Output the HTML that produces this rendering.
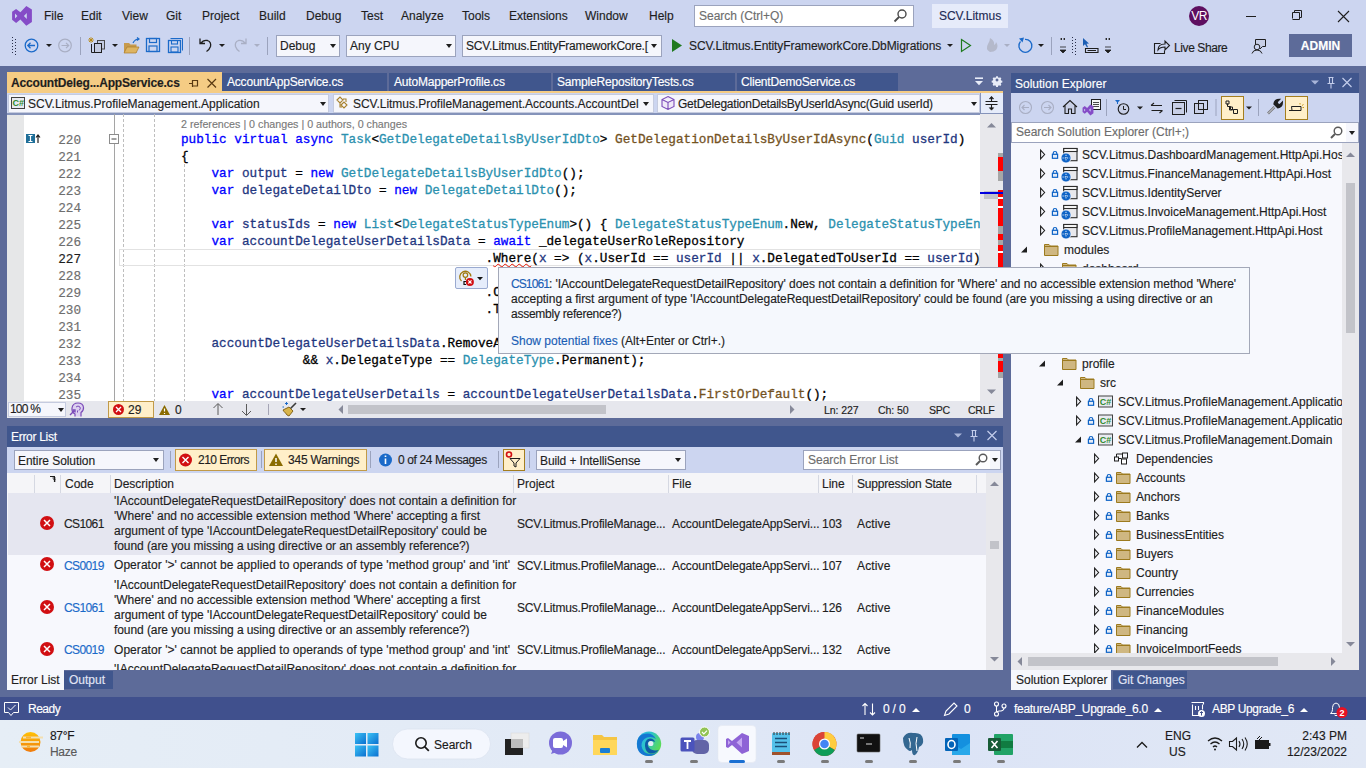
<!DOCTYPE html>
<html><head><meta charset="utf-8">
<style>
*{margin:0;padding:0;box-sizing:border-box}
html,body{width:1366px;height:768px;overflow:hidden;background:#5D6B99;font-family:"Liberation Sans",sans-serif;font-size:12px;color:#1E1E1E;-webkit-text-stroke:0.15px}
.a{position:absolute;white-space:nowrap}
.mono{font-family:"Liberation Mono",monospace}
#top{position:absolute;left:0;top:0;width:1366px;height:66px;background:#CCD5F0}
.menu{top:8px;font-size:12px;color:#1E1E1E;line-height:16px}
.combo{position:absolute;background:#F5F6FC;border:1px solid #9BA3BD;height:22px;line-height:20px;padding-left:3px;font-size:12px;color:#1E1E1E;overflow:hidden}
.dd{position:absolute;width:0;height:0;border-left:3.5px solid transparent;border-right:3.5px solid transparent;border-top:4px solid #1E1E1E}
.code{position:absolute;left:0;font-family:"Liberation Mono",monospace;font-size:12.7px;line-height:17px;white-space:pre;color:#000;-webkit-text-stroke:0.3px}
.k{color:#0000FF}.t{color:#2B91AF}.m{color:#74531F}.l{color:#1F377F}
.ln{position:absolute;left:0;width:81px;text-align:right;font-family:"Liberation Mono",monospace;font-size:12.7px;line-height:17px;color:#6E6E6E}
</style></head><body>
<div id="top"></div>
<!-- VS logo -->
<svg class="a" style="left:0;top:0" width="40" height="32" viewBox="0 0 40 32"><path d="M16.1 8.9 L20.4 12.3 L26.3 6 L31.9 9.4 V22 L26.3 25.8 L20.4 19.4 L16.1 22.9 L12.1 19.8 V11.8 Z M15 13.6 L17.4 16 L15 18.5 Z M26.8 13 L23.9 16.1 L26.8 19.1 Z" fill="#854CC7" fill-rule="evenodd"/></svg>
<span class="a menu" style="left:44px">File</span>
<span class="a menu" style="left:81px">Edit</span>
<span class="a menu" style="left:122px">View</span>
<span class="a menu" style="left:166px">Git</span>
<span class="a menu" style="left:202px">Project</span>
<span class="a menu" style="left:259px">Build</span>
<span class="a menu" style="left:306px">Debug</span>
<span class="a menu" style="left:361px">Test</span>
<span class="a menu" style="left:401px">Analyze</span>
<span class="a menu" style="left:462px">Tools</span>
<span class="a menu" style="left:509px">Extensions</span>
<span class="a menu" style="left:585px">Window</span>
<span class="a menu" style="left:649px">Help</span>
<div class="a" style="left:694px;top:5px;width:220px;height:22px;background:#FFF;border:1px solid #9BA3BD;padding-left:4px;line-height:20px;color:#6D6D6D">Search (Ctrl+Q)</div>
<svg class="a" style="left:890px;top:6px" width="20" height="20" viewBox="890 6 20 20"><circle cx="902" cy="14" r="4" fill="none" stroke="#4A4A4A" stroke-width="1.4"/><path d="M899 17 l-4.5 4.5" stroke="#4A4A4A" stroke-width="1.8"/></svg>
<div class="a" style="left:932px;top:4px;width:76px;height:24px;background:#E6EBFA;line-height:25px;text-align:center;color:#1F2B55">SCV.Litmus</div>
<div class="a" style="left:1189px;top:6px;width:20px;height:20px;border-radius:50%;background:#5E0F60;color:#fff;font-size:12px;line-height:20px;text-align:center;letter-spacing:-0.5px;-webkit-text-stroke:0">VR</div>


<!-- toolbar -->
<svg class="a" style="left:0;top:30px" width="1366" height="34" viewBox="0 30 1366 34">
 <g fill="#2A2F4A"><rect x="12" y="37" width="1" height="1"/><rect x="15" y="39" width="1" height="1"/><rect x="12" y="40" width="1" height="1"/><rect x="15" y="42" width="1" height="1"/><rect x="12" y="43" width="1" height="1"/><rect x="15" y="45" width="1" height="1"/><rect x="12" y="46" width="1" height="1"/><rect x="15" y="48" width="1" height="1"/><rect x="12" y="49" width="1" height="1"/><rect x="15" y="51" width="1" height="1"/><rect x="12" y="52" width="1" height="1"/><rect x="15" y="54" width="1" height="1"/></g>
 <circle cx="31.5" cy="45.5" r="6.3" fill="none" stroke="#1B6AC9" stroke-width="1.3"/>
 <path d="M35 45.5 H28 M30.5 42.8 L27.8 45.5 L30.5 48.2" fill="none" stroke="#1B6AC9" stroke-width="1.3"/>
 <path d="M46 44 H52 L49 47 Z" fill="#1E1E1E"/>
 <circle cx="65" cy="45.5" r="6.3" fill="none" stroke="#A9AFC4" stroke-width="1.2"/>
 <path d="M61.5 45.5 H68.5 M66 42.8 L68.7 45.5 L66 48.2" fill="none" stroke="#A9AFC4" stroke-width="1.2"/>
 <rect x="80" y="37" width="1" height="18" fill="#9BA3BD"/>
 <path d="M89 38 l4 4 M93 38 l-4 4 M91 37.2 v5.6 M88.2 40 h5.6" stroke="#B8860B" stroke-width="0.9"/>
 <rect x="97.5" y="40.5" width="7" height="8.5" fill="#C3CAE0" stroke="#4A4A4A"/>
 <path d="M91.5 44 v8.5 h3" fill="none" stroke="#1E1E1E" stroke-width="1"/>
 <rect x="94.5" y="43.5" width="7" height="9" fill="#C3CAE0" stroke="#1E1E1E"/>
 <path d="M112 44 H118 L115 47 Z" fill="#1E1E1E"/>
 <path d="M124 43 h5 l1.5 1.5 h6 v8.5 h-12.5 z" fill="#C79A4C"/>
 <path d="M124 53 l3 -6 h12 l-3 6 z" fill="#DDB462" stroke="#A97D2C" stroke-width=".7"/>
 <path d="M133 43 q2 -4 6 -4 M137 37.5 l2 1.5 l-2 1.5" fill="none" stroke="#1B6AC9" stroke-width="1.2"/>
 <rect x="146.5" y="38.5" width="13" height="13" fill="none" stroke="#1B6AC9" stroke-width="1.3"/>
 <rect x="149.5" y="38.5" width="7" height="4" fill="none" stroke="#1B6AC9" stroke-width="1.2"/>
 <rect x="149" y="46" width="8" height="5.5" fill="none" stroke="#1B6AC9" stroke-width="1.2"/>
 <rect x="168.5" y="40.5" width="12" height="12" fill="none" stroke="#1B6AC9" stroke-width="1.3"/>
 <path d="M170.5 38.5 h12 v12" fill="none" stroke="#1B6AC9" stroke-width="1"/>
 <rect x="171.5" y="40.5" width="6" height="3.5" fill="none" stroke="#1B6AC9" stroke-width="1.1"/>
 <rect x="171" y="47" width="7" height="5" fill="none" stroke="#1B6AC9" stroke-width="1.1"/>
 <rect x="189" y="37" width="1" height="18" fill="#9BA3BD"/>
 <path d="M200 38.5 v5 h5 M200.5 43.5 q3 -4 7 -3 q4 1.5 3 6 q-1 3 -4 5" fill="none" stroke="#1E1E1E" stroke-width="1.3"/>
 <path d="M219 44 H225 L222 47 Z" fill="#1E1E1E"/>
 <path d="M246 38.5 v5 h-5 M245.5 43.5 q-3 -4 -7 -3 q-4 1.5 -3 6 q1 3 4 5" fill="none" stroke="#A9AFC4" stroke-width="1.3"/>
 <path d="M254 44 H260 L257 47 Z" fill="#A9AFC4"/>
 <rect x="267" y="37" width="1" height="18" fill="#9BA3BD"/>
 <path d="M672 39 L682 45.5 L672 52 Z" fill="#1F7A1F"/>
 <path d="M947 44 H953 L950 47 Z" fill="#1E1E1E"/>
 <path d="M961.5 39.5 L970.5 45.5 L961.5 51.5 Z" fill="none" stroke="#1F7A1F" stroke-width="1.2"/>
 <path d="M990 52 q-5 -3 -2 -8 q2 -3 2 -6 q5 3 4 7 q2 -1 2 -3 q3 4 0 8 q-2 2 -6 2z" fill="#B4B9CB"/>
 <path d="M1004 44 H1010 L1007 47 Z" fill="#A9AFC4"/>
 <path d="M1020.5 41.5 A6.5 6.5 0 1 0 1025 39.3" fill="none" stroke="#1B6AC9" stroke-width="1.3"/><path d="M1019 38.5 L1024 37.5 L1022.5 42.5 Z" fill="#1B6AC9"/>
 <path d="M1038 44 H1044 L1041 47 Z" fill="#1E1E1E"/>
 <rect x="1051" y="37" width="1" height="18" fill="#9BA3BD"/>
 <path d="M1061 38 l1 1 l-1 1 z M1064 38 l1 1 l-1 1 z M1060 47 h6 M1060 50 h6 l-3 3 z" fill="#1E1E1E" stroke="#1E1E1E" stroke-width=".8"/>
 <g fill="#2A2F4A"><rect x="1072" y="37" width="1" height="1"/><rect x="1075" y="39" width="1" height="1"/><rect x="1072" y="40" width="1" height="1"/><rect x="1075" y="42" width="1" height="1"/><rect x="1072" y="43" width="1" height="1"/><rect x="1075" y="45" width="1" height="1"/><rect x="1072" y="46" width="1" height="1"/><rect x="1075" y="48" width="1" height="1"/><rect x="1072" y="49" width="1" height="1"/><rect x="1075" y="51" width="1" height="1"/><rect x="1072" y="52" width="1" height="1"/><rect x="1075" y="54" width="1" height="1"/></g>
 <path d="M1083 38 L1083 46 L1085 44.3 L1087 47.5 L1088 47 L1086.5 43.8 L1089 43.5 Z" fill="#1B5EB5"/>
 <path d="M1085.5 48.5 h12.5 v4 h-12.5 z M1087.5 50.5 h8.5" fill="none" stroke="#1E1E1E" stroke-width="1.1"/>
 <path d="M1106 38 l1 1 l-1 1 z M1109 38 l1 1 l-1 1 z M1105 47 h6 M1105 50 h6 l-3 3 z" fill="#1E1E1E" stroke="#1E1E1E" stroke-width=".8"/>
 <path d="M1160.5 43.5 h-6 v10 h10 v-3 M1158 50 q0 -6 7 -6 v-3 l4.5 4.5 l-4.5 4.5 v-3 q-5 0 -7 3z" fill="none" stroke="#1E1E1E" stroke-width="1.1"/>
 <path d="M1255.5 45 v-5.5 h10 v7 h-3 l-2.5 2.5" fill="#C8CFE6" stroke="#1E1E1E" stroke-width="1"/><circle cx="1257" cy="47" r="2.8" fill="#CCD5F0" stroke="#1E1E1E" stroke-width="1"/><path d="M1252 53.5 q1 -3.5 5 -3.5 q4 0 5 3.5" fill="none" stroke="#1E1E1E" stroke-width="1"/>
</svg>
<div class="combo" style="left:276px;top:35px;width:64px">Debug</div><div class="dd" style="left:330px;top:44px"></div>
<div class="combo" style="left:346px;top:35px;width:110px">Any CPU</div><div class="dd" style="left:446px;top:44px"></div>
<div class="combo" style="left:462px;top:35px;width:200px"><div style="width:186px;overflow:hidden;letter-spacing:-0.2px">SCV.Litmus.EntityFrameworkCore.[</div></div><div class="dd" style="left:651px;top:44px;"></div>
<span class="a" style="left:689px;top:38px;line-height:16px;letter-spacing:-0.08px">SCV.Litmus.EntityFrameworkCore.DbMigrations</span>
<span class="a" style="left:1174px;top:40px;line-height:16px;letter-spacing:-0.4px">Live Share</span>
<div class="a" style="left:1289px;top:34px;width:63px;height:23px;background:#5D6B99;color:#fff;font-weight:bold;font-size:12px;line-height:25px;text-align:center">ADMIN</div>
<!-- window controls -->
<svg class="a" style="left:1230px;top:0" width="136" height="32" viewBox="1230 0 136 32">
 <path d="M1246 16.5 h10" stroke="#1E1E1E" stroke-width="1"/>
 <path d="M1292.5 18.5 v-6 h7 v7 h-7 M1294.5 12.5 v-2 h7 v7 h-2" fill="none" stroke="#1E1E1E" stroke-width="1"/>
 <path d="M1338 11 l11 11 M1349 11 l-11 11" stroke="#1E1E1E" stroke-width="1.1"/>
</svg>

<!-- frame -->
<!-- Doc tabs -->
<div class="a" style="left:7px;top:72px;width:215px;height:21px;background:#F5CC84"></div>
<span class="a" style="left:11px;top:75px;line-height:16px;font-weight:bold;color:#1E1E1E;letter-spacing:-0.17px">AccountDeleg...AppService.cs</span>
<svg class="a" style="left:185px;top:74px" width="36" height="18" viewBox="185 74 36 18">
 <path d="M189 83.5 h3.5 M192.5 80 v7 M192.5 80.5 h5 v5.5 h-5" fill="none" stroke="#5A3A12" stroke-width="1.2"/>
 <path d="M207.5 79 l8.5 8.5 M216 79 l-8.5 8.5" stroke="#5A3A12" stroke-width="1.2"/>
</svg>
<div class="a" style="left:222px;top:73px;width:165px;height:18px;background:#40568D;color:#fff;line-height:18px;padding-left:5px;letter-spacing:-0.2px">AccountAppService.cs</div>
<div class="a" style="left:389px;top:73px;width:162px;height:18px;background:#40568D;color:#fff;line-height:18px;padding-left:5px;letter-spacing:-0.2px">AutoMapperProfile.cs</div>
<div class="a" style="left:553px;top:73px;width:182px;height:18px;background:#40568D;color:#fff;line-height:18px;padding-left:4px;letter-spacing:-0.2px">SampleRepositoryTests.cs</div>
<div class="a" style="left:737px;top:73px;width:161px;height:18px;background:#40568D;color:#fff;line-height:18px;padding-left:4px;letter-spacing:-0.2px">ClientDemoService.cs</div>
<svg class="a" style="left:970px;top:73px" width="35" height="18" viewBox="970 73 35 18">
 <path d="M975 78.2 h8" stroke="#E8ECF8" stroke-width="1.6"/>
 <path d="M975 81 h8 l-4 4.2 z" fill="#E8ECF8"/>
 <g transform="translate(997 80) scale(0.72)" fill="#E8ECF8"><path d="M-1.2 -5.2 h2.4 l0.4 1.6 l1.4 0.6 l1.4 -0.9 l1.7 1.7 l-0.9 1.4 l0.6 1.4 l1.6 0.4 v2.4 l-1.6 0.4 l-0.6 1.4 l0.9 1.4 l-1.7 1.7 l-1.4 -0.9 l-1.4 0.6 l-0.4 1.6 h-2.4 l-0.4 -1.6 l-1.4 -0.6 l-1.4 0.9 l-1.7 -1.7 l0.9 -1.4 l-0.6 -1.4 l-1.6 -0.4 v-2.4 l1.6 -0.4 l0.6 -1.4 l-0.9 -1.4 l1.7 -1.7 l1.4 0.9 l1.4 -0.6 z M0 -2 a2 2 0 1 0 0.01 0 z" fill-rule="evenodd"/></g>
</svg>
<div class="a" style="left:7px;top:91px;width:996px;height:2px;background:#F5CC84"></div>
<!-- nav bar -->
<div class="a" style="left:7px;top:93px;width:996px;height:21px;background:#CCD5F0"></div>

<div class="a" style="left:8px;top:94px;width:321px;height:19px;background:#F5F6FC;border:1px solid #C5CBDF"></div>
<svg class="a" style="left:10px;top:95px" width="16" height="16" viewBox="0 0 16 16"><rect x="1.5" y="2.5" width="13" height="11" fill="#E8EAF0" stroke="#424242"/><text x="2.6" y="11.3" font-family="Liberation Sans" font-weight="bold" font-size="9" fill="#2E8B2E" style="-webkit-text-stroke:0.3px #2E8B2E">C#</text></svg>
<span class="a" style="left:28px;top:96px;line-height:16px">SCV.Litmus.ProfileManagement.Application</span>
<div class="dd" style="left:320px;top:102px"></div>
<div class="a" style="left:333px;top:94px;width:321px;height:19px;background:#F5F6FC;border:1px solid #C5CBDF"></div>
<svg class="a" style="left:335px;top:95px" width="17" height="17" viewBox="0 0 17 17"><path d="M2 5 l3 -3 l3 3 l-3 3 z M6 10 l3 -3 l3 3 l-3 3 z M8 4 h3 v3 M5 8 v4 h2" fill="none" stroke="#A8822E" stroke-width="1.1"/></svg>
<span class="a" style="left:353px;top:96px;line-height:16px;letter-spacing:-0.03px">SCV.Litmus.ProfileManagement.Accounts.AccountDel</span>
<div class="dd" style="left:643px;top:102px"></div>
<div class="a" style="left:657px;top:94px;width:323px;height:19px;background:#F5F6FC;border:1px solid #C5CBDF"></div>
<svg class="a" style="left:660px;top:95px" width="16" height="16" viewBox="0 0 16 16"><path d="M8 1.5 l6 3 v7 l-6 3 l-6 -3 v-7 z M2 4.5 l6 3 l6 -3 M8 7.5 v7" fill="#EFE8F8" stroke="#7B4BB8" stroke-width="1.1"/></svg>
<span class="a" style="left:678px;top:96px;line-height:16px;letter-spacing:-0.23px">GetDelegationDetailsByUserIdAsync(Guid userId)</span>
<div class="dd" style="left:971px;top:102px"></div>
<div class="a" style="left:980px;top:93px;width:23px;height:20px;background:#E6ECFA;border-left:1px solid #8593BA"></div>
<svg class="a" style="left:981px;top:93px" width="22" height="20" viewBox="981 93 22 20"><path d="M985.5 101.5 h12 M985.5 104.5 h12" stroke="#1E1E1E" stroke-width="1.1"/><path d="M991.5 101.5 v-4 M991.5 105 v4" stroke="#1E1E1E" stroke-width="1.1"/><path d="M989.3 98.8 l2.2 -2.5 l2.2 2.5 z M989.3 107.7 l2.2 2.5 l2.2 -2.5 z" fill="#1E1E1E" stroke="#1E1E1E" stroke-width=".6"/></svg>

<!-- editor body -->
<div class="a" style="left:7px;top:114px;width:973px;height:287px;background:#FFF"></div>
<div class="a" style="left:7px;top:114px;width:17px;height:287px;background:#E6E7E8"></div>
<div class="a" style="left:7px;top:113px;width:996px;height:2px;background:#8593BA"></div>
<div class="a" style="left:114px;top:114px;width:1px;height:287px;background:#A5A5A5"></div>
<svg class="a" style="left:0;top:114px" width="980" height="287" viewBox="0 114 980 287">
 <path d="M123.5 114 V401 M154.5 114 V401" stroke="#BEBEBE" stroke-dasharray="3 2" stroke-width="1"/>
 <path d="M184.5 164 V401" stroke="#BEBEBE" stroke-dasharray="3 2" stroke-width="1"/>
 <rect x="109.5" y="134.5" width="9" height="9" fill="#fff" stroke="#8C8C8C"/>
 <path d="M111.5 139 h5" stroke="#424242"/>
 <rect x="26" y="134" width="9" height="9" fill="#1F6F99"/>
 <path d="M28.5 135.5 h4 M30.5 135.5 v6 M28.5 141.5 h4" stroke="#fff" stroke-width="1.2"/>
 <path d="M38 143 V135 M36 137.5 l2 -2.5 l2 2.5" fill="none" stroke="#1E1E1E" stroke-width="1.2"/>
 <rect x="119.5" y="249.5" width="860" height="16" fill="none" stroke="#E2E2E2"/>
</svg>
<span class="a" style="left:181px;top:117px;font-size:10.7px;line-height:14px;color:#7A7A7A">2 references | 0 changes | 0 authors, 0 changes</span>
<div class="ln" style="top:132px">220<br>221<br>222<br>223<br>224<br>225<br>226<br><b style="color:#1E1E1E;font-weight:normal">227</b><br>228<br>229<br>230<br>231<br>232<br>233<br>234<br>235</div>
<div class="code" style="left:181px;top:130.5px"><span class="k">public virtual async</span> <span class="t">Task</span>&lt;<span class="t">GetDelegateDetailsByUserIdDto</span>&gt; <span class="m">GetDelegationDetailsByUserIdAsync</span>(<span class="t">Guid</span> <span class="l">userId</span>)
{
    <span class="k">var</span> <span class="l">output</span> = <span class="k">new</span> <span class="t">GetDelegateDetailsByUserIdDto</span>();
    <span class="k">var</span> <span class="l">delegateDetailDto</span> = <span class="k">new</span> <span class="t">DelegateDetailDto</span>();

    <span class="k">var</span> <span class="l">statusIds</span> = <span class="k">new</span> <span class="t">List</span>&lt;<span class="t">DelegateStatusTypeEnum</span>&gt;() { <span class="t">DelegateStatusTypeEnum</span>.New, <span class="t">DelegateStatusTypeEn</span>
    <span class="k">var</span> <span class="l">accountDelegateUserDetailsData</span> = <span class="k">await</span> _delegateUserRoleRepository
                                        .<span style="text-decoration:underline wavy #E51400;text-decoration-thickness:1px">Where</span>(<span class="l">x</span> =&gt; (<span class="l">x</span>.UserId == <span class="l">userId</span> || <span class="l">x</span>.DelegatedToUserId == <span class="l">userId</span>)

                                        .C
                                        .T

    <span class="l">accountDelegateUserDetailsData</span>.RemoveA
                &amp;&amp; <span class="l">x</span>.DelegateType == <span class="t">DelegateType</span>.Permanent);

    <span class="k">var</span> <span class="l">accountDelegateUserDetails</span> = <span class="l">accountDelegateUserDetailsData</span>.<span class="m">FirstOrDefault</span>();</div>
<!-- editor vscroll -->
<div class="a" style="left:980px;top:114px;width:23px;height:287px;background:#E8E8EC"></div>
<svg class="a" style="left:980px;top:114px" width="23" height="287" viewBox="980 114 23 287">
 <path d="M987 127.5 h9 l-4.5 -4.5 z" fill="#868999"/>
 <path d="M987 389.5 h9 l-4.5 4.5 z" fill="#868999"/>
 <rect x="998" y="153" width="5" height="28" fill="#A6A6A6"/>
 <rect x="998" y="157" width="5" height="14" fill="#FF0000"/>
 <rect x="984" y="191" width="14" height="8" fill="#C2C3C9"/>
 <rect x="998" y="190" width="5" height="77" fill="#FF0000"/>
 <rect x="998" y="226" width="5" height="8" fill="#A6A6A6"/>
 <rect x="998" y="240" width="5" height="5" fill="#A6A6A6"/>
 <rect x="998" y="197" width="5" height="2" fill="#fff"/>
 <rect x="998" y="251" width="5" height="2" fill="#fff"/><rect x="998" y="206" width="5" height="2" fill="#fff"/>
 <rect x="980" y="192" width="23" height="2" fill="#0000E0"/>
 <rect x="998" y="354" width="5" height="18" fill="#FF0000"/>
 <rect x="998" y="358" width="5" height="3" fill="#A6A6A6"/>
 <rect x="998" y="372" width="5" height="6" fill="#A6A6A6"/>
</svg>
<!-- editor bottom bar -->
<div class="a" style="left:7px;top:401px;width:996px;height:17px;background:#E6E7ED"></div>
<div class="a" style="left:8px;top:402px;width:58px;height:15px;background:#F5F6FC;border:1px solid #C5CBDF;line-height:13px;padding-left:1px;font-size:12px;letter-spacing:-0.8px">100 %</div>
<div class="dd" style="left:58px;top:408px"></div>
<svg class="a" style="left:68px;top:401px" width="18" height="17" viewBox="0 0 18 17"><path d="M7 15.5 v-2.5 q-3.5 -1.5 -3 -6 q0.8 -5 6 -5 q5 0 5.5 4.5 q0.3 3 -2.5 5 v4" fill="#DCD0F0" stroke="#7B4BB8" stroke-width="1.2"/><path d="M8 6 q2 -2 4 0 q1 2 -1 3.5 M9.5 9.5 v2" fill="none" stroke="#7B4BB8" stroke-width="1"/><path d="M2 14 l4 -4 M4.5 9 l2.5 0 l0 2.5" fill="none" stroke="#7B4BB8" stroke-width="1.4"/></svg>
<div class="a" style="left:108px;top:401px;width:46px;height:17px;background:#FFEFC9;border:1px solid #C19A48"></div>
<svg class="a" style="left:108px;top:401px" width="90" height="17" viewBox="108 401 90 17"><circle cx="118.5" cy="409.5" r="5.5" fill="#D10F12"/><path d="M116 407 l5 5 M121 407 l-5 5" stroke="#fff" stroke-width="1.3"/><path d="M159 415 l5.5 -10 l5.5 10 z" fill="#8A6B00"/><path d="M164.5 408.5 v3 M164.5 413 v1" stroke="#fff" stroke-width="1.2"/></svg>
<span class="a" style="left:128px;top:403px;line-height:15px">29</span>
<span class="a" style="left:175px;top:403px;line-height:15px">0</span>
<svg class="a" style="left:200px;top:401px" width="150" height="17" viewBox="200 401 150 17">
 <path d="M218 415 v-11 M213.5 408 l4.5 -4.5 l4.5 4.5" fill="none" stroke="#5A5A5A" stroke-width="1"/>
 <path d="M246.5 404 v11 M242 411 l4.5 4.5 l4.5 -4.5" fill="none" stroke="#5A5A5A" stroke-width="1"/>
 <rect x="268" y="404" width="1" height="11" fill="#A5A5B5"/>
 <path d="M296 403 l-5.5 5.5" stroke="#3A3A3A" stroke-width="1.6"/><path d="M289 407 l4 4 l-4 5 l-2 -1 l-1.5 -2 l-1.5 -1.5 l-1 -1.5 z" fill="#D9B54A" stroke="#7A5A10" stroke-width="0.9"/><path d="M285 403.5 h3 M286.5 402 v3 M282.5 407 h1.5" stroke="#1B6AC9" stroke-width="1"/>
 <path d="M300 408 h6 l-3 3 z" fill="#1E1E1E"/>
 <path d="M343 405 v9 l-4.5 -4.5 z" fill="#868999"/>
</svg>
<div class="a" style="left:348px;top:405px;width:258px;height:9px;background:#C2C3C9"></div>
<svg class="a" style="left:785px;top:401px" width="12" height="17" viewBox="785 401 12 17"><path d="M790 405 v9 l4.5 -4.5 z" fill="#868999"/></svg>
<span class="a" style="left:824px;top:403px;line-height:15px;font-size:10.6px;letter-spacing:-0.1px">Ln: 227</span>
<span class="a" style="left:878px;top:403px;line-height:15px;font-size:10.6px;letter-spacing:-0.1px">Ch: 50</span>
<span class="a" style="left:929px;top:403px;line-height:15px;font-size:10.6px;letter-spacing:-0.3px">SPC</span>
<span class="a" style="left:968px;top:403px;line-height:15px;font-size:10.6px;letter-spacing:-0.3px">CRLF</span>

<!-- Solution explorer -->
<div class="a" style="left:1011px;top:73px;width:348px;height:20px;background:#40568D"></div>
<span class="a" style="left:1015px;top:76px;line-height:16px;color:#fff">Solution Explorer</span>
<svg class="a" style="left:1300px;top:73px" width="59" height="20" viewBox="1300 73 59 20">
 <path d="M1311 80.5 h8 l-4 4 z" fill="#A9B5D9"/>
 <path d="M1328.5 77.5 h5 M1329.5 77.5 v6 M1332.5 77.5 v6 M1327.5 83.5 h7 M1331 83.5 v5" fill="none" stroke="#C3CDEB" stroke-width="1.1"/>
 <path d="M1342.5 78 l9 9 M1351.5 78 l-9 9" stroke="#C3CDEB" stroke-width="1.2"/>
</svg>
<div class="a" style="left:1011px;top:93px;width:348px;height:29px;background:#CCD5F0"></div>
<svg class="a" style="left:1011px;top:93px" width="348" height="29" viewBox="1011 93 348 29">
 <circle cx="1025.5" cy="107.5" r="6" fill="none" stroke="#A9AFC4" stroke-width="1.1"/><path d="M1029 107.5 h-7 M1024.5 105 l-2.5 2.5 l2.5 2.5" fill="none" stroke="#A9AFC4" stroke-width="1.1"/>
 <circle cx="1047.5" cy="107.5" r="6" fill="none" stroke="#A9AFC4" stroke-width="1.1"/><path d="M1044 107.5 h7 M1048.5 105 l2.5 2.5 l-2.5 2.5" fill="none" stroke="#A9AFC4" stroke-width="1.1"/>
 <path d="M1065 105.5 v8 h3.5 v-4.5 h3 v4.5 h3.5 v-8 l-5 -4.5 z" fill="#C8CFE6" stroke="none"/><path d="M1063 107 l7 -6.5 l7 6.5 M1065 105.5 v8 h3.5 v-4.5 h3 v4.5 h3.5 v-8" fill="none" stroke="#1E1E1E" stroke-width="1.1"/>
 <rect x="1091.5" y="99.5" width="9" height="10" fill="#F5F5F5" stroke="#1E1E1E"/><path d="M1093 102.5 h6 M1093 104.5 h6 M1093 106.5 h6" stroke="#1E1E1E" stroke-width=".8"/><g transform="translate(1082.5 104.5) scale(0.55)"><path d="M16.1 8.9 L20.4 12.3 L26.3 6 L31.9 9.4 V22 L26.3 25.8 L20.4 19.4 L16.1 22.9 L12.1 19.8 V11.8 Z M15 13.6 L17.4 16 L15 18.5 Z M26.8 13 L23.9 16.1 L26.8 19.1 Z" transform="translate(-12 -6)" fill="#854CC7" fill-rule="evenodd"/></g>
 
 <rect x="1106" y="99" width="1" height="17" fill="#9BA3BD"/>
 <path d="M1115 100 h5 l-2.5 3 z" fill="#1B6AC9"/><path d="M1117.5 102 v2" stroke="#1B6AC9" stroke-width="1"/>
 <circle cx="1123.5" cy="109" r="5.3" fill="#C8CFE6" stroke="#1E1E1E" stroke-width="1.1"/><path d="M1123.5 106 v3.5 h2.5" fill="none" stroke="#1E1E1E" stroke-width="1"/>
 <path d="M1137 106.5 h6 l-3 3 z" fill="#1E1E1E"/>
 <path d="M1151 105.5 h11 M1151 105.5 l3 -2.5 M1162.5 110.5 h-11 M1162.5 110.5 l-3 2.5" fill="none" stroke="#1E1E1E" stroke-width="1.1"/>
 <rect x="1172.5" y="102.5" width="12" height="12" fill="#C8CFE6" stroke="#1E1E1E"/><path d="M1174.5 100.5 h12 v12" fill="none" stroke="#1E1E1E"/><path d="M1175.5 108.5 h6" stroke="#1E1E1E" stroke-width="1.2"/>
 <rect x="1194.5" y="103.5" width="9" height="10" fill="#C8CFE6" stroke="#1E1E1E"/><rect x="1198.5" y="100.5" width="9" height="9" fill="none" stroke="#1E1E1E"/>
 <rect x="1215.5" y="99" width="1" height="17" fill="#9BA3BD"/>
 <rect x="1221.5" y="96.5" width="22" height="23" fill="#FFEFC9" stroke="#A47E1F"/>
 <path d="M1227.5 103.5 v3 h3 v3 h3 M1226 101 h3 v3 h-3 z M1229.5 107 h3 v3 h-3 z M1233.5 109.5 h4 v4 h-4 z" fill="none" stroke="#1E1E1E" stroke-width="1"/>
 <path d="M1246 106.5 h6 l-3 3 z" fill="#1E1E1E"/>
 <rect x="1258" y="99" width="1" height="17" fill="#9BA3BD"/>
 <path d="M1268 113.5 l6.5 -6.5" stroke="#777" stroke-width="2.6"/><path d="M1268 113.5 l6.5 -6.5" stroke="#D8DCEB" stroke-width="1"/><path d="M1274 104 q0.5 -4.5 5.5 -4.5 l-2.5 2.5 l0.8 2 l2 0.8 l2.5 -2.5 q0 5 -4.5 5.5 z" fill="#1E1E1E" stroke="#1E1E1E" stroke-width="1.4"/>
 <rect x="1285.5" y="96.5" width="22" height="23" fill="#FFEFC9" stroke="#A47E1F"/>
 <path d="M1289 110.5 h3 M1291.5 106.5 h9.5 v4 h-9 z" fill="none" stroke="#1E1E1E" stroke-width="1"/><path d="M1300 103 v1.5 M1302 105.5 l1.5 -1 M1302.5 107.5 h1.5" stroke="#C79A1F" stroke-width="1"/>
</svg>
<div class="a" style="left:1011px;top:122px;width:336px;height:21px;background:#FFF;border:1px solid #9BA3BD;line-height:19px;padding-left:4px;color:#6D6D6D">Search Solution Explorer (Ctrl+;)</div>
<div class="a" style="left:1346px;top:122px;width:13px;height:21px;background:#F5F6FC;border:1px solid #9BA3BD;border-left:none"></div>
<div class="dd" style="left:1349px;top:131px"></div>
<svg class="a" style="left:1325px;top:122px" width="20" height="21" viewBox="1325 122 20 21"><circle cx="1338" cy="131" r="3.8" fill="none" stroke="#5A5A5A" stroke-width="1.4"/><path d="M1335 134 l-4 4" stroke="#5A5A5A" stroke-width="2"/></svg>
<div class="a" style="left:1011px;top:143px;width:348px;height:527px;background:#F7F8FD"></div>
<div class="a" style="left:1011px;top:143px;width:331px;height:510px;overflow:hidden">
<div style="position:absolute;left:-1011px;top:-143px;width:1366px;height:768px">
<svg class="a" style="left:0;top:0" width="1366" height="768"><path d="M1040.6 150.2 L1044.6 154.5 L1040.6 158.8 Z" fill="none" stroke="#1E1E1E" stroke-width="1.1"/><path d="M1053.2 154.5 v-1.2 a1.8 1.8 0 0 1 3.6 0 v1.2" fill="none" stroke="#0E63C6" stroke-width="1.2"/><rect x="1052.4" y="154.3" width="5.2" height="4" fill="#E4ECF8" stroke="#0E63C6" stroke-width="1.2"/><rect x="1063.7" y="148.5" width="13.3" height="12.2" fill="#E8E8EC" stroke="#2D2D2D" stroke-width="1.1"/><rect x="1063.7" y="148.5" width="13.3" height="3" fill="#fff" stroke="#2D2D2D" stroke-width="1.1"/><circle cx="1066" cy="158.0" r="5" fill="#0E63C6" stroke="#F7F8FD" stroke-width="0.8"/><path d="M1062.5 158.0 h7 M1066 154.8 v6.4" stroke="#fff" stroke-width=".9" stroke-dasharray="1.2 1"/><path d="M1040.6 169.2 L1044.6 173.5 L1040.6 177.8 Z" fill="none" stroke="#1E1E1E" stroke-width="1.1"/><path d="M1053.2 173.5 v-1.2 a1.8 1.8 0 0 1 3.6 0 v1.2" fill="none" stroke="#0E63C6" stroke-width="1.2"/><rect x="1052.4" y="173.3" width="5.2" height="4" fill="#E4ECF8" stroke="#0E63C6" stroke-width="1.2"/><rect x="1063.7" y="167.5" width="13.3" height="12.2" fill="#E8E8EC" stroke="#2D2D2D" stroke-width="1.1"/><rect x="1063.7" y="167.5" width="13.3" height="3" fill="#fff" stroke="#2D2D2D" stroke-width="1.1"/><circle cx="1066" cy="177.0" r="5" fill="#0E63C6" stroke="#F7F8FD" stroke-width="0.8"/><path d="M1062.5 177.0 h7 M1066 173.8 v6.4" stroke="#fff" stroke-width=".9" stroke-dasharray="1.2 1"/><path d="M1040.6 188.2 L1044.6 192.5 L1040.6 196.8 Z" fill="none" stroke="#1E1E1E" stroke-width="1.1"/><path d="M1053.2 192.5 v-1.2 a1.8 1.8 0 0 1 3.6 0 v1.2" fill="none" stroke="#0E63C6" stroke-width="1.2"/><rect x="1052.4" y="192.3" width="5.2" height="4" fill="#E4ECF8" stroke="#0E63C6" stroke-width="1.2"/><rect x="1063.7" y="186.5" width="13.3" height="12.2" fill="#E8E8EC" stroke="#2D2D2D" stroke-width="1.1"/><rect x="1063.7" y="186.5" width="13.3" height="3" fill="#fff" stroke="#2D2D2D" stroke-width="1.1"/><circle cx="1066" cy="196.0" r="5" fill="#0E63C6" stroke="#F7F8FD" stroke-width="0.8"/><path d="M1062.5 196.0 h7 M1066 192.8 v6.4" stroke="#fff" stroke-width=".9" stroke-dasharray="1.2 1"/><path d="M1040.6 207.2 L1044.6 211.5 L1040.6 215.8 Z" fill="none" stroke="#1E1E1E" stroke-width="1.1"/><path d="M1053.2 211.5 v-1.2 a1.8 1.8 0 0 1 3.6 0 v1.2" fill="none" stroke="#0E63C6" stroke-width="1.2"/><rect x="1052.4" y="211.3" width="5.2" height="4" fill="#E4ECF8" stroke="#0E63C6" stroke-width="1.2"/><rect x="1063.7" y="205.5" width="13.3" height="12.2" fill="#E8E8EC" stroke="#2D2D2D" stroke-width="1.1"/><rect x="1063.7" y="205.5" width="13.3" height="3" fill="#fff" stroke="#2D2D2D" stroke-width="1.1"/><circle cx="1066" cy="215.0" r="5" fill="#0E63C6" stroke="#F7F8FD" stroke-width="0.8"/><path d="M1062.5 215.0 h7 M1066 211.8 v6.4" stroke="#fff" stroke-width=".9" stroke-dasharray="1.2 1"/><path d="M1040.6 226.2 L1044.6 230.5 L1040.6 234.8 Z" fill="none" stroke="#1E1E1E" stroke-width="1.1"/><path d="M1053.2 230.5 v-1.2 a1.8 1.8 0 0 1 3.6 0 v1.2" fill="none" stroke="#0E63C6" stroke-width="1.2"/><rect x="1052.4" y="230.3" width="5.2" height="4" fill="#E4ECF8" stroke="#0E63C6" stroke-width="1.2"/><rect x="1063.7" y="224.5" width="13.3" height="12.2" fill="#E8E8EC" stroke="#2D2D2D" stroke-width="1.1"/><rect x="1063.7" y="224.5" width="13.3" height="3" fill="#fff" stroke="#2D2D2D" stroke-width="1.1"/><circle cx="1066" cy="234.0" r="5" fill="#0E63C6" stroke="#F7F8FD" stroke-width="0.8"/><path d="M1062.5 234.0 h7 M1066 230.8 v6.4" stroke="#fff" stroke-width=".9" stroke-dasharray="1.2 1"/><path d="M1027 246.5 V252.5 H1021 Z" fill="#1E1E1E"/><path d="M1044.5 244.5 h4.5 l1.5 1.5 h7.5 v9.5 h-13.5 z" fill="#CFB781" stroke="#9C7A1E" stroke-width="1"/><path d="M1044.5 246.5 h13.5" stroke="#9C7A1E" stroke-width="1"/><path d="M1040.6 264.2 L1044.6 268.5 L1040.6 272.8 Z" fill="none" stroke="#1E1E1E" stroke-width="1.1"/><path d="M1062.5 263.5 h4.5 l1.5 1.5 h7.5 v9.5 h-13.5 z" fill="#CFB781" stroke="#9C7A1E" stroke-width="1"/><path d="M1062.5 265.5 h13.5" stroke="#9C7A1E" stroke-width="1"/><path d="M1045 360.5 V366.5 H1039 Z" fill="#1E1E1E"/><path d="M1062.5 358.5 h4.5 l1.5 1.5 h7.5 v9.5 h-13.5 z" fill="#CFB781" stroke="#9C7A1E" stroke-width="1"/><path d="M1062.5 360.5 h13.5" stroke="#9C7A1E" stroke-width="1"/><path d="M1063 379.5 V385.5 H1057 Z" fill="#1E1E1E"/><path d="M1080.5 377.5 h4.5 l1.5 1.5 h7.5 v9.5 h-13.5 z" fill="#CFB781" stroke="#9C7A1E" stroke-width="1"/><path d="M1080.5 379.5 h13.5" stroke="#9C7A1E" stroke-width="1"/><path d="M1076.6 397.2 L1080.6 401.5 L1076.6 405.8 Z" fill="none" stroke="#1E1E1E" stroke-width="1.1"/><path d="M1089.2 401.5 v-1.2 a1.8 1.8 0 0 1 3.6 0 v1.2" fill="none" stroke="#0E63C6" stroke-width="1.2"/><rect x="1088.4" y="401.3" width="5.2" height="4" fill="#E4ECF8" stroke="#0E63C6" stroke-width="1.2"/><rect x="1098.5" y="396.0" width="14" height="11" fill="#E8EAF0" stroke="#424242" stroke-width="1"/><text x="1099.8" y="405.1" font-family="Liberation Sans" font-weight="bold" font-size="9" fill="#2E8B2E" style="-webkit-text-stroke:0.3px #2E8B2E">C#</text><path d="M1076.6 416.2 L1080.6 420.5 L1076.6 424.8 Z" fill="none" stroke="#1E1E1E" stroke-width="1.1"/><path d="M1089.2 420.5 v-1.2 a1.8 1.8 0 0 1 3.6 0 v1.2" fill="none" stroke="#0E63C6" stroke-width="1.2"/><rect x="1088.4" y="420.3" width="5.2" height="4" fill="#E4ECF8" stroke="#0E63C6" stroke-width="1.2"/><rect x="1098.5" y="415.0" width="14" height="11" fill="#E8EAF0" stroke="#424242" stroke-width="1"/><text x="1099.8" y="424.1" font-family="Liberation Sans" font-weight="bold" font-size="9" fill="#2E8B2E" style="-webkit-text-stroke:0.3px #2E8B2E">C#</text><path d="M1081 436.5 V442.5 H1075 Z" fill="#1E1E1E"/><path d="M1089.2 439.5 v-1.2 a1.8 1.8 0 0 1 3.6 0 v1.2" fill="none" stroke="#0E63C6" stroke-width="1.2"/><rect x="1088.4" y="439.3" width="5.2" height="4" fill="#E4ECF8" stroke="#0E63C6" stroke-width="1.2"/><rect x="1098.5" y="434.0" width="14" height="11" fill="#E8EAF0" stroke="#424242" stroke-width="1"/><text x="1099.8" y="443.1" font-family="Liberation Sans" font-weight="bold" font-size="9" fill="#2E8B2E" style="-webkit-text-stroke:0.3px #2E8B2E">C#</text><path d="M1094.6 454.2 L1098.6 458.5 L1094.6 462.8 Z" fill="none" stroke="#1E1E1E" stroke-width="1.1"/><rect x="1114.5" y="457.0" width="4" height="4" fill="none" stroke="#1E1E1E"/><rect x="1122.5" y="453.0" width="5" height="5" fill="none" stroke="#1E1E1E"/><rect x="1121.5" y="459.0" width="5" height="5" fill="#fff" stroke="#1E1E1E"/><path d="M1118.5 458.5 h3 M1116.5 457.0 v-3 h6" fill="none" stroke="#1E1E1E"/><path d="M1094.6 473.2 L1098.6 477.5 L1094.6 481.8 Z" fill="none" stroke="#1E1E1E" stroke-width="1.1"/><path d="M1107.2 477.5 v-1.2 a1.8 1.8 0 0 1 3.6 0 v1.2" fill="none" stroke="#0E63C6" stroke-width="1.2"/><rect x="1106.4" y="477.3" width="5.2" height="4" fill="#E4ECF8" stroke="#0E63C6" stroke-width="1.2"/><path d="M1116.5 472.5 h4.5 l1.5 1.5 h7.5 v9.5 h-13.5 z" fill="#CFB781" stroke="#9C7A1E" stroke-width="1"/><path d="M1116.5 474.5 h13.5" stroke="#9C7A1E" stroke-width="1"/><path d="M1094.6 492.2 L1098.6 496.5 L1094.6 500.8 Z" fill="none" stroke="#1E1E1E" stroke-width="1.1"/><path d="M1107.2 496.5 v-1.2 a1.8 1.8 0 0 1 3.6 0 v1.2" fill="none" stroke="#0E63C6" stroke-width="1.2"/><rect x="1106.4" y="496.3" width="5.2" height="4" fill="#E4ECF8" stroke="#0E63C6" stroke-width="1.2"/><path d="M1116.5 491.5 h4.5 l1.5 1.5 h7.5 v9.5 h-13.5 z" fill="#CFB781" stroke="#9C7A1E" stroke-width="1"/><path d="M1116.5 493.5 h13.5" stroke="#9C7A1E" stroke-width="1"/><path d="M1094.6 511.2 L1098.6 515.5 L1094.6 519.8 Z" fill="none" stroke="#1E1E1E" stroke-width="1.1"/><path d="M1107.2 515.5 v-1.2 a1.8 1.8 0 0 1 3.6 0 v1.2" fill="none" stroke="#0E63C6" stroke-width="1.2"/><rect x="1106.4" y="515.3" width="5.2" height="4" fill="#E4ECF8" stroke="#0E63C6" stroke-width="1.2"/><path d="M1116.5 510.5 h4.5 l1.5 1.5 h7.5 v9.5 h-13.5 z" fill="#CFB781" stroke="#9C7A1E" stroke-width="1"/><path d="M1116.5 512.5 h13.5" stroke="#9C7A1E" stroke-width="1"/><path d="M1094.6 530.2 L1098.6 534.5 L1094.6 538.8 Z" fill="none" stroke="#1E1E1E" stroke-width="1.1"/><path d="M1107.2 534.5 v-1.2 a1.8 1.8 0 0 1 3.6 0 v1.2" fill="none" stroke="#0E63C6" stroke-width="1.2"/><rect x="1106.4" y="534.3" width="5.2" height="4" fill="#E4ECF8" stroke="#0E63C6" stroke-width="1.2"/><path d="M1116.5 529.5 h4.5 l1.5 1.5 h7.5 v9.5 h-13.5 z" fill="#CFB781" stroke="#9C7A1E" stroke-width="1"/><path d="M1116.5 531.5 h13.5" stroke="#9C7A1E" stroke-width="1"/><path d="M1094.6 549.2 L1098.6 553.5 L1094.6 557.8 Z" fill="none" stroke="#1E1E1E" stroke-width="1.1"/><path d="M1107.2 553.5 v-1.2 a1.8 1.8 0 0 1 3.6 0 v1.2" fill="none" stroke="#0E63C6" stroke-width="1.2"/><rect x="1106.4" y="553.3" width="5.2" height="4" fill="#E4ECF8" stroke="#0E63C6" stroke-width="1.2"/><path d="M1116.5 548.5 h4.5 l1.5 1.5 h7.5 v9.5 h-13.5 z" fill="#CFB781" stroke="#9C7A1E" stroke-width="1"/><path d="M1116.5 550.5 h13.5" stroke="#9C7A1E" stroke-width="1"/><path d="M1094.6 568.2 L1098.6 572.5 L1094.6 576.8 Z" fill="none" stroke="#1E1E1E" stroke-width="1.1"/><path d="M1107.2 572.5 v-1.2 a1.8 1.8 0 0 1 3.6 0 v1.2" fill="none" stroke="#0E63C6" stroke-width="1.2"/><rect x="1106.4" y="572.3" width="5.2" height="4" fill="#E4ECF8" stroke="#0E63C6" stroke-width="1.2"/><path d="M1116.5 567.5 h4.5 l1.5 1.5 h7.5 v9.5 h-13.5 z" fill="#CFB781" stroke="#9C7A1E" stroke-width="1"/><path d="M1116.5 569.5 h13.5" stroke="#9C7A1E" stroke-width="1"/><path d="M1094.6 587.2 L1098.6 591.5 L1094.6 595.8 Z" fill="none" stroke="#1E1E1E" stroke-width="1.1"/><path d="M1107.2 591.5 v-1.2 a1.8 1.8 0 0 1 3.6 0 v1.2" fill="none" stroke="#0E63C6" stroke-width="1.2"/><rect x="1106.4" y="591.3" width="5.2" height="4" fill="#E4ECF8" stroke="#0E63C6" stroke-width="1.2"/><path d="M1116.5 586.5 h4.5 l1.5 1.5 h7.5 v9.5 h-13.5 z" fill="#CFB781" stroke="#9C7A1E" stroke-width="1"/><path d="M1116.5 588.5 h13.5" stroke="#9C7A1E" stroke-width="1"/><path d="M1094.6 606.2 L1098.6 610.5 L1094.6 614.8 Z" fill="none" stroke="#1E1E1E" stroke-width="1.1"/><path d="M1107.2 610.5 v-1.2 a1.8 1.8 0 0 1 3.6 0 v1.2" fill="none" stroke="#0E63C6" stroke-width="1.2"/><rect x="1106.4" y="610.3" width="5.2" height="4" fill="#E4ECF8" stroke="#0E63C6" stroke-width="1.2"/><path d="M1116.5 605.5 h4.5 l1.5 1.5 h7.5 v9.5 h-13.5 z" fill="#CFB781" stroke="#9C7A1E" stroke-width="1"/><path d="M1116.5 607.5 h13.5" stroke="#9C7A1E" stroke-width="1"/><path d="M1094.6 625.2 L1098.6 629.5 L1094.6 633.8 Z" fill="none" stroke="#1E1E1E" stroke-width="1.1"/><path d="M1107.2 629.5 v-1.2 a1.8 1.8 0 0 1 3.6 0 v1.2" fill="none" stroke="#0E63C6" stroke-width="1.2"/><rect x="1106.4" y="629.3" width="5.2" height="4" fill="#E4ECF8" stroke="#0E63C6" stroke-width="1.2"/><path d="M1116.5 624.5 h4.5 l1.5 1.5 h7.5 v9.5 h-13.5 z" fill="#CFB781" stroke="#9C7A1E" stroke-width="1"/><path d="M1116.5 626.5 h13.5" stroke="#9C7A1E" stroke-width="1"/><path d="M1094.6 644.2 L1098.6 648.5 L1094.6 652.8 Z" fill="none" stroke="#1E1E1E" stroke-width="1.1"/><path d="M1107.2 648.5 v-1.2 a1.8 1.8 0 0 1 3.6 0 v1.2" fill="none" stroke="#0E63C6" stroke-width="1.2"/><rect x="1106.4" y="648.3" width="5.2" height="4" fill="#E4ECF8" stroke="#0E63C6" stroke-width="1.2"/><path d="M1116.5 643.5 h4.5 l1.5 1.5 h7.5 v9.5 h-13.5 z" fill="#CFB781" stroke="#9C7A1E" stroke-width="1"/><path d="M1116.5 645.5 h13.5" stroke="#9C7A1E" stroke-width="1"/></svg>
<span class="a" style="left:1082px;top:147.1px;line-height:17px">SCV.Litmus.DashboardManagement.HttpApi.Host</span>
<span class="a" style="left:1082px;top:166.1px;line-height:17px">SCV.Litmus.FinanceManagement.HttpApi.Host</span>
<span class="a" style="left:1082px;top:185.1px;line-height:17px">SCV.Litmus.IdentityServer</span>
<span class="a" style="left:1082px;top:204.1px;line-height:17px">SCV.Litmus.InvoiceManagement.HttpApi.Host</span>
<span class="a" style="left:1082px;top:223.1px;line-height:17px">SCV.Litmus.ProfileManagement.HttpApi.Host</span>
<span class="a" style="left:1064px;top:242.1px;line-height:17px">modules</span>
<span class="a" style="left:1082px;top:261.1px;line-height:17px">dashboard</span>
<span class="a" style="left:1082px;top:356.1px;line-height:17px">profile</span>
<span class="a" style="left:1100px;top:375.1px;line-height:17px">src</span>
<span class="a" style="left:1118px;top:394.1px;line-height:17px">SCV.Litmus.ProfileManagement.Application.Contracts</span>
<span class="a" style="left:1118px;top:413.1px;line-height:17px">SCV.Litmus.ProfileManagement.Application</span>
<span class="a" style="left:1118px;top:432.1px;line-height:17px">SCV.Litmus.ProfileManagement.Domain</span>
<span class="a" style="left:1136px;top:451.1px;line-height:17px">Dependencies</span>
<span class="a" style="left:1136px;top:470.1px;line-height:17px">Accounts</span>
<span class="a" style="left:1136px;top:489.1px;line-height:17px">Anchors</span>
<span class="a" style="left:1136px;top:508.1px;line-height:17px">Banks</span>
<span class="a" style="left:1136px;top:527.1px;line-height:17px">BusinessEntities</span>
<span class="a" style="left:1136px;top:546.1px;line-height:17px">Buyers</span>
<span class="a" style="left:1136px;top:565.1px;line-height:17px">Country</span>
<span class="a" style="left:1136px;top:584.1px;line-height:17px">Currencies</span>
<span class="a" style="left:1136px;top:603.1px;line-height:17px">FinanceModules</span>
<span class="a" style="left:1136px;top:622.1px;line-height:17px">Financing</span>
<span class="a" style="left:1136px;top:641.1px;line-height:17px">InvoiceImportFeeds</span>
</div></div>
<div class="a" style="left:1342px;top:143px;width:17px;height:510px;background:#E8E8EC"></div>
<div class="a" style="left:1346px;top:183px;width:9px;height:150px;background:#C2C3C9"></div>
<div class="a" style="left:1011px;top:653px;width:348px;height:17px;background:#E8E8EC"></div>
<div class="a" style="left:1028px;top:657px;width:250px;height:9px;background:#C2C3C9"></div>
<svg class="a" style="left:1011px;top:143px" width="348" height="527" viewBox="1011 143 348 527">
 <path d="M1346 157 h9 l-4.5 -4.5 z" fill="#868999"/>
 <path d="M1346 642 h9 l-4.5 4.5 z" fill="#868999"/>
 <path d="M1022 657 v9 l-4.5 -4.5 z" fill="#868999"/>
 <path d="M1331 657 v9 l4.5 -4.5 z" fill="#868999"/>
</svg>
<div class="a" style="left:1011px;top:670px;width:100px;height:20px;background:#F5F7FC;line-height:20px;padding-left:5px">Solution Explorer</div>
<div class="a" style="left:1113px;top:671px;width:74px;height:18px;background:#40568D;line-height:18px;padding-left:5px;color:#E0E5F5">Git Changes</div>

<!-- Error list -->
<div class="a" style="left:7px;top:426px;width:996px;height:21px;background:#40568D"></div>
<span class="a" style="left:11px;top:429px;line-height:16px;color:#fff;letter-spacing:-0.3px">Error List</span>
<svg class="a" style="left:940px;top:426px" width="63" height="20" viewBox="940 426 63 20">
 <path d="M954 433.5 h8 l-4 4 z" fill="#A9B5D9"/>
 <path d="M971.5 430.5 h5 M972.5 430.5 v6 M975.5 430.5 v6 M970.5 436.5 h7 M974 436.5 v5" fill="none" stroke="#C3CDEB" stroke-width="1.1"/>
 <path d="M987.5 431 l9 9 M996.5 431 l-9 9" stroke="#C3CDEB" stroke-width="1.2"/>
</svg>
<div class="a" style="left:7px;top:447px;width:996px;height:26px;background:#CCD5F0"></div>
<div class="combo" style="left:14px;top:450px;width:150px;height:20px;line-height:20px;padding-left:3px;letter-spacing:-0.07px">Entire Solution</div><div class="dd" style="left:153px;top:458px"></div>
<svg class="a" style="left:165px;top:446px" width="540" height="27" viewBox="165 446 540 27">
 <rect x="170" y="451" width="1" height="17" fill="#9BA3BD"/>
 <rect x="175.5" y="449.5" width="81" height="21" fill="#FFEFC9" stroke="#C19A48"/>
 <circle cx="185.5" cy="460" r="6.5" fill="#D10F12"/><path d="M182.5 457 l6 6 M188.5 457 l-6 6" stroke="#fff" stroke-width="1.4"/>
 <rect x="261" y="451" width="1" height="17" fill="#9BA3BD"/>
 <rect x="264.5" y="449.5" width="102" height="21" fill="#FFEFC9" stroke="#C19A48"/>
 <path d="M269 466 l7 -12.5 l7 12.5 z" fill="#8A6B00"/><path d="M276 458 v4 M276 463.5 v1.5" stroke="#fff" stroke-width="1.5"/>
 <rect x="370" y="451" width="1" height="17" fill="#9BA3BD"/>
 <circle cx="385.5" cy="460" r="6.5" fill="#1B6AC9"/><path d="M385.5 458.5 v5.5 M385.5 455.5 v1.5" stroke="#fff" stroke-width="1.6"/>
 <rect x="498" y="451" width="1" height="17" fill="#9BA3BD"/>
 <rect x="503.5" y="449.5" width="21" height="21" fill="#FFEFC9" stroke="#A47E1F"/>
 <circle cx="509" cy="454.5" r="2.5" fill="none" stroke="#D10F12" stroke-width="1.6"/>
 <path d="M510 458.5 h10 l-4 4.5 v4 l-2 -1 v-3 z" fill="none" stroke="#1E1E1E" stroke-width="1"/>
 <rect x="529" y="451" width="1" height="17" fill="#9BA3BD"/>
</svg>
<span class="a" style="left:198px;top:452px;line-height:16px;letter-spacing:-0.5px">210 Errors</span>
<span class="a" style="left:288px;top:452px;line-height:16px;letter-spacing:-0.2px">345 Warnings</span>
<span class="a" style="left:398px;top:452px;line-height:16px;letter-spacing:-0.37px">0 of 24 Messages</span>
<div class="combo" style="left:536px;top:450px;width:150px;height:20px;line-height:20px;padding-left:3px;letter-spacing:-0.1px">Build + IntelliSense</div><div class="dd" style="left:675px;top:458px"></div>
<div class="a" style="left:803px;top:450px;width:188px;height:20px;background:#FFF;border:1px solid #9BA3BD;line-height:19px;padding-left:4px;color:#6D6D6D">Search Error List</div>
<div class="a" style="left:990px;top:450px;width:11px;height:20px;background:#F5F6FC;border:1px solid #9BA3BD;border-left:none"></div>
<div class="dd" style="left:992px;top:458px"></div>
<svg class="a" style="left:970px;top:450px" width="20" height="20" viewBox="970 450 20 20"><circle cx="983" cy="458" r="3.8" fill="none" stroke="#5A5A5A" stroke-width="1.4"/><path d="M980 461 l-4 4" stroke="#5A5A5A" stroke-width="2"/></svg>
<!-- grid -->
<div class="a" style="left:7px;top:473px;width:996px;height:197px;background:#F7F8FD"></div>
<div class="a" style="left:8px;top:473px;width:978px;height:21px;background:#F5F5F8;border-bottom:1px solid #D5D8E2"></div>
<svg class="a" style="left:7px;top:473px" width="996" height="20" viewBox="7 473 996 20">
 <path d="M34.5 475 v18 M60.5 475 v18 M110.5 475 v18 M513.5 475 v18 M668.5 475 v18 M818.5 475 v18 M852.5 475 v18 M976.5 475 v18" stroke="#D5D8E2"/>
 <path d="M50 476.5 h5 M52.5 478 h3 M53.5 479.5 h2 M54.5 481 h1" stroke="#1E1E1E" stroke-width="1"/><path d="M54.5 477 v5" stroke="#1E1E1E" stroke-width="1.2"/>
</svg>
<span class="a" style="left:65px;top:476px;line-height:16px">Code</span>
<span class="a" style="left:114px;top:476px;line-height:16px">Description</span>
<span class="a" style="left:517px;top:476px;line-height:16px">Project</span>
<span class="a" style="left:672px;top:476px;line-height:16px">File</span>
<span class="a" style="left:822px;top:476px;line-height:16px">Line</span>
<span class="a" style="left:857px;top:476px;line-height:16px;letter-spacing:-0.2px">Suppression State</span>
<div class="a" style="left:8px;top:493px;width:978px;height:177px;overflow:hidden">
<div style="position:absolute;left:-8px;top:-493px;width:1000px;height:700px">
<div class="a" style="left:8px;top:493px;width:978px;height:62px;background:#E5E6F0"></div>
<svg class="a" style="left:39px;top:515px" width="16" height="16" viewBox="0 0 16 16"><circle cx="8" cy="8" r="7" fill="#D10F12"/><path d="M5 5 l6 6 M11 5 l-6 6" stroke="#fff" stroke-width="1.5"/></svg>
<span class="a" style="left:64px;top:516.0px;line-height:16px;color:#1E1E1E;letter-spacing:-0.6px">CS1061</span>
<span class="a" style="left:114px;top:494.0px;line-height:15px">'IAccountDelegateRequestDetailRepository' does not contain a definition for</span>
<span class="a" style="left:114px;top:509.0px;line-height:15px;letter-spacing:-0.03px">'Where' and no accessible extension method 'Where' accepting a first</span>
<span class="a" style="left:114px;top:524.0px;line-height:15px;letter-spacing:-0.02px">argument of type 'IAccountDelegateRequestDetailRepository' could be</span>
<span class="a" style="left:114px;top:539.0px;line-height:15px;letter-spacing:-0.08px">found (are you missing a using directive or an assembly reference?)</span>
<span class="a" style="left:517px;top:516.0px;line-height:16px;letter-spacing:-0.17px">SCV.Litmus.ProfileManage...</span>
<span class="a" style="left:672px;top:516.0px;line-height:16px;letter-spacing:-0.1px">AccountDelegateAppServi...</span>
<span class="a" style="left:822px;top:516.0px;line-height:16px">103</span>
<span class="a" style="left:857px;letter-spacing:0.15px;top:516.0px;line-height:16px">Active</span>
<svg class="a" style="left:39px;top:556px" width="16" height="16" viewBox="0 0 16 16"><circle cx="8" cy="8" r="7" fill="#D10F12"/><path d="M5 5 l6 6 M11 5 l-6 6" stroke="#fff" stroke-width="1.5"/></svg>
<span class="a" style="left:64px;top:557.5px;line-height:16px;color:#1B6AC9;letter-spacing:-0.6px">CS0019</span>
<span class="a" style="left:114px;top:558.0px;line-height:15px;letter-spacing:0.05px">Operator '&gt;' cannot be applied to operands of type 'method group' and 'int'</span>
<span class="a" style="left:517px;top:557.5px;line-height:16px;letter-spacing:-0.17px">SCV.Litmus.ProfileManage...</span>
<span class="a" style="left:672px;top:557.5px;line-height:16px;letter-spacing:-0.1px">AccountDelegateAppServi...</span>
<span class="a" style="left:822px;top:557.5px;line-height:16px">107</span>
<span class="a" style="left:857px;letter-spacing:0.15px;top:557.5px;line-height:16px">Active</span>
<svg class="a" style="left:39px;top:599px" width="16" height="16" viewBox="0 0 16 16"><circle cx="8" cy="8" r="7" fill="#D10F12"/><path d="M5 5 l6 6 M11 5 l-6 6" stroke="#fff" stroke-width="1.5"/></svg>
<span class="a" style="left:64px;top:600.0px;line-height:16px;color:#1B6AC9;letter-spacing:-0.6px">CS1061</span>
<span class="a" style="left:114px;top:578.0px;line-height:15px">'IAccountDelegateRequestDetailRepository' does not contain a definition for</span>
<span class="a" style="left:114px;top:593.0px;line-height:15px;letter-spacing:-0.03px">'Where' and no accessible extension method 'Where' accepting a first</span>
<span class="a" style="left:114px;top:608.0px;line-height:15px;letter-spacing:-0.02px">argument of type 'IAccountDelegateRequestDetailRepository' could be</span>
<span class="a" style="left:114px;top:623.0px;line-height:15px;letter-spacing:-0.08px">found (are you missing a using directive or an assembly reference?)</span>
<span class="a" style="left:517px;top:600.0px;line-height:16px;letter-spacing:-0.17px">SCV.Litmus.ProfileManage...</span>
<span class="a" style="left:672px;top:600.0px;line-height:16px;letter-spacing:-0.1px">AccountDelegateAppServi...</span>
<span class="a" style="left:822px;top:600.0px;line-height:16px">126</span>
<span class="a" style="left:857px;letter-spacing:0.15px;top:600.0px;line-height:16px">Active</span>
<svg class="a" style="left:39px;top:641px" width="16" height="16" viewBox="0 0 16 16"><circle cx="8" cy="8" r="7" fill="#D10F12"/><path d="M5 5 l6 6 M11 5 l-6 6" stroke="#fff" stroke-width="1.5"/></svg>
<span class="a" style="left:64px;top:642.0px;line-height:16px;color:#1B6AC9;letter-spacing:-0.6px">CS0019</span>
<span class="a" style="left:114px;top:642.5px;line-height:15px;letter-spacing:0.05px">Operator '&gt;' cannot be applied to operands of type 'method group' and 'int'</span>
<span class="a" style="left:517px;top:642.0px;line-height:16px;letter-spacing:-0.17px">SCV.Litmus.ProfileManage...</span>
<span class="a" style="left:672px;top:642.0px;line-height:16px;letter-spacing:-0.1px">AccountDelegateAppServi...</span>
<span class="a" style="left:822px;top:642.0px;line-height:16px">132</span>
<span class="a" style="left:857px;letter-spacing:0.15px;top:642.0px;line-height:16px">Active</span>
<svg class="a" style="left:39px;top:683px" width="16" height="16" viewBox="0 0 16 16"><circle cx="8" cy="8" r="7" fill="#D10F12"/><path d="M5 5 l6 6 M11 5 l-6 6" stroke="#fff" stroke-width="1.5"/></svg>
<span class="a" style="left:64px;top:684.0px;line-height:16px;color:#1B6AC9;letter-spacing:-0.6px">CS1061</span>
<span class="a" style="left:114px;top:662.0px;line-height:15px">'IAccountDelegateRequestDetailRepository' does not contain a definition for</span>
<span class="a" style="left:114px;top:677.0px;line-height:15px;letter-spacing:-0.03px">'Where' and no accessible extension method 'Where' accepting a first</span>
<span class="a" style="left:114px;top:692.0px;line-height:15px;letter-spacing:-0.02px">argument of type 'IAccountDelegateRequestDetailRepository' could be</span>
<span class="a" style="left:114px;top:707.0px;line-height:15px;letter-spacing:-0.08px">found (are you missing a using directive or an assembly reference?)</span>
<span class="a" style="left:517px;top:684.0px;line-height:16px;letter-spacing:-0.17px">SCV.Litmus.ProfileManage...</span>
<span class="a" style="left:672px;top:684.0px;line-height:16px;letter-spacing:-0.1px">AccountDelegateAppServi...</span>
<span class="a" style="left:822px;top:684.0px;line-height:16px">138</span>
<span class="a" style="left:857px;letter-spacing:0.15px;top:684.0px;line-height:16px">Active</span>
</div></div>
<div class="a" style="left:986px;top:473px;width:17px;height:197px;background:#E8E8EC"></div>
<svg class="a" style="left:986px;top:473px" width="17" height="197" viewBox="986 473 17 197">
 <path d="M990 486 h9 l-4.5 -4.5 z" fill="#868999"/>
 <path d="M990 657 h9 l-4.5 4.5 z" fill="#868999"/>
 <rect x="990" y="541" width="9" height="8" fill="#C2C3C9"/>
</svg>
<div class="a" style="left:7px;top:670px;width:57px;height:20px;background:#F5F7FC;line-height:20px;padding-left:4px">Error List</div>
<div class="a" style="left:64px;top:671px;width:49px;height:18px;background:#40568D;line-height:18px;padding-left:5px;color:#E0E5F5">Output</div>

<!-- status bar -->
<div class="a" style="left:0;top:697px;width:1366px;height:23px;background:#40508D"></div>
<svg class="a" style="left:0;top:697px" width="1366" height="23" viewBox="0 697 1366 23">
 <path d="M4.5 702.5 h14 v10 h-5 l-2.5 3 l-2.5 -3 h-4 z" fill="none" stroke="#fff" stroke-width="1"/>
 <path d="M8 707.5 l2.5 2.5 l5 -5" fill="none" stroke="#fff" stroke-width="1"/>
 <path d="M865 715 v-11.5 M862.5 706 l2.5 -2.5 l2.5 2.5 M872.5 703.5 v11.5 M870 712.5 l2.5 2.5 l2.5 -2.5" fill="none" stroke="#fff" stroke-width="1.1"/>
 <path d="M912 712 h8 l-4 -4 z" fill="#fff"/>
 <path d="M944.5 715.5 l1.5 -4.5 l8 -8 l3 3 l-8 8 z" fill="none" stroke="#fff" stroke-width="1.1"/>
 <circle cx="996.5" cy="704" r="2" fill="none" stroke="#fff" stroke-width="1.1"/>
 <circle cx="996.5" cy="714" r="2" fill="none" stroke="#fff" stroke-width="1.1"/>
 <circle cx="1004" cy="706" r="2" fill="none" stroke="#fff" stroke-width="1.1"/>
 <path d="M996.5 706 v6 M1004 708 q0 2.5 -3 3 h-2 l-2.5 1" fill="none" stroke="#fff" stroke-width="1.1"/>
 <path d="M1154 712 h8 l-4 -4 z" fill="#fff"/>
 <path d="M1191.5 702.5 h12 v2 M1192.5 704.5 v11 h7 M1202.5 704.5 v5 M1195.5 706 v4 M1198.5 706 v4" fill="none" stroke="#fff" stroke-width="1.1"/>
 <circle cx="1201.5" cy="713.5" r="3.5" fill="#fff"/><path d="M1201.5 715.5 v-3.5 M1200 713 l1.5 -1.5 l1.5 1.5" fill="none" stroke="#40508D" stroke-width="1"/>
 <path d="M1300 712 h8 l-4 -4 z" fill="#fff"/>
 <path d="M1330.5 713.5 h11 q-2 -1.5 -2 -4 v-2 q0 -4 -3.5 -4.5 q-3.5 .5 -3.5 4.5 v2 q0 2.5 -2 4 z M1334.5 715 q1.5 1.5 3 0" fill="none" stroke="#fff" stroke-width="1"/>
 <circle cx="1342" cy="712.5" r="5.5" fill="#E81123"/>
 <text x="1342" y="716" font-family="Liberation Sans" font-weight="bold" font-size="9" fill="#fff" text-anchor="middle">2</text>
</svg>
<span class="a" style="left:28px;top:701px;line-height:16px;color:#fff;letter-spacing:-0.5px">Ready</span>
<span class="a" style="left:883px;top:701px;line-height:16px;color:#fff;letter-spacing:-0.2px">0 / 0</span>
<span class="a" style="left:964px;top:701px;line-height:16px;color:#fff">0</span>
<span class="a" style="left:1014px;top:701px;line-height:16px;color:#fff;letter-spacing:-0.3px">feature/ABP_Upgrade_6.0</span>
<span class="a" style="left:1212px;top:701px;line-height:16px;color:#fff;letter-spacing:-0.35px">ABP Upgrade_6</span>
<!-- taskbar -->
<div class="a" style="left:0;top:720px;width:1366px;height:48px;background:linear-gradient(90deg,#E6EEF6 0%,#E2EAF6 40%,#DCE4F6 70%,#E1E8F5 100%)"></div>
<svg class="a" style="left:0;top:720px" width="1366" height="48" viewBox="0 720 1366 48">
 <defs>
  <linearGradient id="sun" x1="0" y1="0" x2="0" y2="1"><stop offset="0" stop-color="#FFC107"/><stop offset="1" stop-color="#F07A0C"/></linearGradient>
  <linearGradient id="win" x1="0" y1="0" x2="1" y2="1"><stop offset="0" stop-color="#3CC3F5"/><stop offset="1" stop-color="#0A6FD0"/></linearGradient>
  <linearGradient id="edge" x1="0" y1="0" x2="1" y2="0.5"><stop offset="0" stop-color="#2FB6F2"/><stop offset=".5" stop-color="#2CC3C9"/><stop offset="1" stop-color="#5ADB58"/></linearGradient>
 </defs>
 <circle cx="30.5" cy="742" r="10" fill="url(#sun)"/>
 <path d="M23 737.5 h20 M19 742 h20 M21 746.5 h18" stroke="#F3DFB0" stroke-width="2"/>
 <path d="M26 737.5 h5 M27 746.5 h3" stroke="#F8B53A" stroke-width="2"/>
 <rect x="355" y="733" width="11" height="11" fill="url(#win)"/>
 <rect x="367.5" y="733" width="11" height="11" fill="url(#win)"/>
 <rect x="355" y="745.5" width="11" height="11" fill="url(#win)"/>
 <rect x="367.5" y="745.5" width="11" height="11" fill="url(#win)"/>
 <rect x="392.5" y="729" width="98" height="30" rx="15" fill="#F4F7FE" stroke="#DCE3F0" stroke-width=".8"/>
 <circle cx="421" cy="743" r="5.2" fill="none" stroke="#1A1A1A" stroke-width="1.6"/><path d="M424.8 746.8 l4 4" stroke="#1A1A1A" stroke-width="1.8"/>
 <rect x="511" y="733" width="18" height="15" fill="#EDEDED" stroke="#DADADA" stroke-width=".6"/>
 <rect x="505" y="739" width="18" height="16" fill="#222"/>
 <rect x="511" y="739" width="12" height="9" fill="#BDBDBD"/>
 <circle cx="560.5" cy="743" r="11.5" fill="#7B6CD9"/><path d="M551 754 l2 -5 l4 3z" fill="#7B6CD9"/>
 <rect x="553" y="738" width="10" height="10" rx="2" fill="#fff"/><path d="M563 741 l4 -2.5 v9 l-4 -2.5z" fill="#fff"/>
 <path d="M593 735 h9 l2 2 h13 v18 h-24 z" fill="#F5C543"/>
 <path d="M593 740 h24 v15 h-24 z" fill="#FFD75A"/>
 <rect x="600" y="748" width="10" height="5" rx="1" fill="#1A7ED4"/>
 <circle cx="649" cy="743.8" r="12.2" fill="url(#edge)"/>
 <path d="M637 744 Q637 737 642 734.5 Q652 731 656 739 Q652 736 647 737.5 Q641 740 641.5 746 Q642.5 753 650 754 Q655 754.5 658.5 750.5 Q655 756 648.5 756 Q637 755.5 637 744 Z" fill="#1577D2"/>
 <path d="M645 746 Q644.5 739.5 650 738.5 Q654 738.5 655 742 Q652 740.5 650 741 Q647 742.5 648 746 Q649.5 750 655 750.5 Q658 750.5 659 749.5 Q656 754 650 753.5 Q645.5 752 645 746 Z" fill="#0D5AA7"/>
 <circle cx="650.8" cy="743.5" r="2.6" fill="#E2EAF6"/>
 <rect x="645" y="760" width="8" height="3" rx="1.5" fill="#7A7A7A"/>
 <circle cx="700" cy="737" r="4" fill="#7B83EB"/><rect x="692" y="740" width="17" height="14" rx="5" fill="#6264A7"/>
 <rect x="680.5" y="737.5" width="14" height="14" rx="1.5" fill="#4B53BC"/>
 <path d="M684 741 h7 M687.5 741 v8" stroke="#fff" stroke-width="1.8"/>
 <circle cx="704.5" cy="732" r="5" fill="#92C353" stroke="#fff" stroke-width="1"/><path d="M702 732 l1.8 1.8 l3.2 -3.2" fill="none" stroke="#fff" stroke-width="1.2"/>
 <rect x="690" y="760" width="8" height="3" rx="1.5" fill="#7A7A7A"/>
 <rect x="718" y="725.5" width="38" height="37" rx="4" fill="#F7F9FE" stroke="#E5E9F2" stroke-width=".6"/>
 <path d="M742 733 l7 3 v15 l-7 3 l-10 -9 l-4 3 l-2 -1 v-8 l2 -1 l4 3 z" fill="#8E63D6"/>
 <path d="M742 737.5 l-5.5 5 l5.5 5 z M728 740 v5 l2.5 -2.5 z" fill="#C5A8F2"/>
 <rect x="729" y="760" width="16" height="3" rx="1.5" fill="#1A6FD2"/>
 <rect x="772" y="733" width="18" height="22" rx="1" fill="#54C1EA"/>
 <rect x="772" y="752" width="18" height="3" fill="#A0522D"/>
 <path d="M775 738.5 h12 M775 742.5 h12 M775 746.5 h12" stroke="#1B4F78" stroke-width="1.5"/>
 <path d="M774 732 v3 M777 732 v3 M780 732 v3 M783 732 v3 M786 732 v3 M789 732 v3" stroke="#333" stroke-width="1"/>
 <rect x="777" y="760" width="8" height="3" rx="1.5" fill="#7A7A7A"/>
 <circle cx="824.5" cy="744" r="12" fill="#DB4437"/>
 <path d="M824.5 744 L814.1 750 A12 12 0 0 1 824.5 732 Z" fill="#DB4437"/>
 <path d="M824.5 744 L824.5 732 A12 12 0 0 1 834.9 750 Z" fill="#FFCD40"/>
 <path d="M824.5 744 L834.9 750 A12 12 0 0 1 814.1 750 Z" fill="#0F9D58"/>
 <circle cx="824.5" cy="744" r="5.5" fill="#fff"/><circle cx="824.5" cy="744" r="4.3" fill="#4285F4"/>
 <rect x="821" y="760" width="8" height="3" rx="1.5" fill="#7A7A7A"/>
 <rect x="857" y="734" width="23" height="18" rx="1" fill="#111" stroke="#666" stroke-width=".6"/>
 <path d="M860 738 h4 M866 744 h6" stroke="#ddd" stroke-width="1"/>
 <rect x="865" y="760" width="8" height="3" rx="1.5" fill="#7A7A7A"/>
 <path d="M903 738 q3 -6 10 -5 q9 -1 10 6 q1 6 -4 8 q-1 6 -4 8 q-3 1 -3 -5 q-2 2 -4 0 q-5 -3 -5 -12z" fill="#336791"/>
 <path d="M909 738 q2 5 1 10 M917 737 q-2 6 0 14" stroke="#fff" stroke-width="1" fill="none"/>
 <rect x="909" y="760" width="8" height="3" rx="1.5" fill="#7A7A7A"/>
 <rect x="952" y="734" width="18" height="21" rx="1" fill="#1490DF"/>
 <path d="M952 743 l9 6 l9 -6 v12 h-18 z" fill="#28A8EA"/>
 <rect x="945" y="738" width="13" height="13" rx="1" fill="#0364B8"/>
 <ellipse cx="951.5" cy="744.5" rx="3.5" ry="4" fill="none" stroke="#fff" stroke-width="1.6"/>
 <rect x="953" y="760" width="8" height="3" rx="1.5" fill="#7A7A7A"/>
 <rect x="994" y="734" width="19" height="21" rx="1" fill="#21A366"/>
 <rect x="994" y="741" width="19" height="7" fill="#107C41"/>
 <rect x="988" y="738" width="13" height="13" rx="1" fill="#185C37"/>
 <path d="M991.5 741 l6 7 M997.5 741 l-6 7" stroke="#fff" stroke-width="1.6"/>
 <rect x="997" y="760" width="8" height="3" rx="1.5" fill="#7A7A7A"/>
 <path d="M1137 747.5 l5 -5 l5 5" fill="none" stroke="#1A1A1A" stroke-width="1.3"/>
 <path d="M1208 741 q7 -6 14 0 M1210.5 744 q4.5 -4 9 0 M1213 747 q2 -2 4 0" fill="none" stroke="#1A1A1A" stroke-width="1.3"/>
 <circle cx="1215" cy="749.5" r="1" fill="#1A1A1A"/>
 <path d="M1229.5 741.5 h3 l4 -3.5 v12 l-4 -3.5 h-3 z M1239 741 q2 3 0 6 M1242 739 q3.5 5 0 10 M1245 737.5 q4.5 6.5 0 13" fill="none" stroke="#1A1A1A" stroke-width="1.1"/>
 <rect x="1255.5" y="740.5" width="13" height="8" fill="#1A1A1A" stroke="#1A1A1A"/><rect x="1269" y="743" width="1.5" height="3" fill="#1A1A1A"/>
 <path d="M1257 739 l3 -3 M1259 740 l3 -3" stroke="#1A1A1A" stroke-width="1"/>
</svg>
<span class="a" style="left:50px;top:729px;line-height:15px;color:#1A1A1A;letter-spacing:-0.3px">87°F</span>
<span class="a" style="left:50px;top:745px;line-height:15px;color:#5A5A5A;letter-spacing:-0.3px">Haze</span>
<span class="a" style="left:434px;top:737px;line-height:16px;color:#1A1A1A">Search</span>
<span class="a" style="left:1165px;top:729px;line-height:15px;color:#1A1A1A">ENG</span>
<span class="a" style="left:1169px;top:745px;line-height:15px;color:#1A1A1A">US</span>
<span class="a" style="left:1286px;top:729px;width:61px;text-align:right;line-height:15px;color:#1A1A1A">2:43 PM</span>
<span class="a" style="left:1276px;top:745px;width:71px;text-align:right;line-height:15px;color:#1A1A1A">12/23/2022</span>
<!-- lightbulb -->
<div class="a" style="left:455px;top:267px;width:33px;height:22px;background:#E6EDFB;border:1px solid #9AAAD0;border-radius:2px"></div>
<svg class="a" style="left:455px;top:267px" width="33" height="22" viewBox="455 267 33 22">
 <path d="M461.5 281 A5.6 5.6 0 1 1 470.9 276.5" fill="none" stroke="#A07A10" stroke-width="1.3"/>
 <circle cx="465.4" cy="275.1" r="2.3" fill="none" stroke="#A07A10" stroke-width="1.2"/>
 <path d="M465.4 277.4 v2.6" stroke="#A07A10" stroke-width="1.2"/>
 <path d="M466 281.5 h-2 v3 h2" fill="none" stroke="#111" stroke-width="1.2"/>
 <circle cx="469.9" cy="281.9" r="4" fill="#D10F12"/>
 <path d="M468.3 280.3 l3.2 3.2 M471.5 280.3 l-3.2 3.2" stroke="#fff" stroke-width="1.1"/>
 <path d="M477 277 h6 l-3 3.2 z" fill="#111"/>
</svg>
<!-- tooltip -->
<div class="a" style="left:498px;top:267px;width:752px;height:87px;background:#F5F8FD;border:1px solid #A3A8B8"></div>
<span class="a" style="left:511px;top:277px;line-height:15px;letter-spacing:-0.045px"><span style="color:#1B5EB5;letter-spacing:-0.9px">CS1061</span>: 'IAccountDelegateRequestDetailRepository' does not contain a definition for 'Where' and no accessible extension method 'Where'</span>
<span class="a" style="left:511px;top:292px;line-height:15px;letter-spacing:-0.04px">accepting a first argument of type 'IAccountDelegateRequestDetailRepository' could be found (are you missing a using directive or an</span>
<span class="a" style="left:511px;top:307px;line-height:15px;letter-spacing:-0.25px">assembly reference?)</span>
<span class="a" style="left:511px;top:334px;line-height:15px"><span style="color:#1B5EB5">Show potential fixes</span> (Alt+Enter or Ctrl+.)</span>
</body></html>
